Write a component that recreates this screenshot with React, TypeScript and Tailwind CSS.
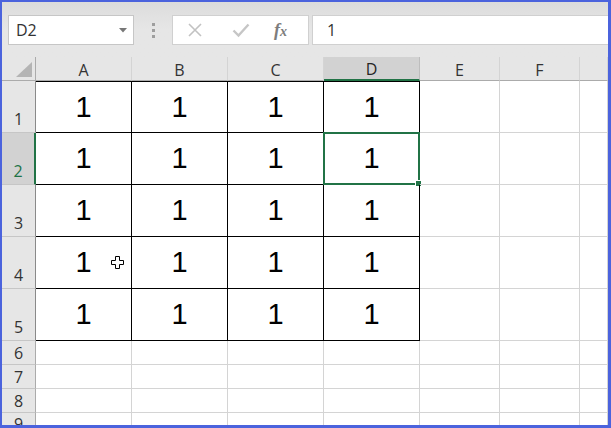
import React from 'react';

const COLS = ['A', 'B', 'C', 'D', 'E', 'F', ''];
const ROWS = [
  { n: '1', h: 'big' },
  { n: '2', h: 'big' },
  { n: '3', h: 'big' },
  { n: '4', h: 'big' },
  { n: '5', h: 'big' },
  { n: '6', h: 'small' },
  { n: '7', h: 'small' },
  { n: '8', h: 'small' },
  { n: '9', h: 'small' },
];

const ui = { fontFamily: '"Open Sans", "Noto Sans", sans-serif' };
const cellFont = { fontFamily: '"Liberation Sans", Arial, sans-serif' };

function PlusCursor() {
  return (
    <svg width="13" height="13" viewBox="0 0 13 13" className="absolute left-[75px] top-[19px]">
      <path
        d="M4.5 0.5h4v4h4v4h-4v4h-4v-4h-4v-4h4z"
        fill="#fff"
        stroke="#000"
        strokeWidth="1"
      />
    </svg>
  );
}

function FormulaBar() {
  return (
    <div className="flex h-[55px] items-start bg-gradient-to-b from-[#dcdcdc] via-[#e6e6e6] to-[#e6e6e6] pt-[13px]" style={ui}>
      <div className="ml-[6px] flex h-[30px] w-[126px] items-center justify-between border border-[#c6c6c6] bg-white pl-[7px] pr-[6px]">
        <span className="text-[16px] text-[#333]">D2</span>
        <svg width="8" height="5" viewBox="0 0 8 5">
          <path d="M0 0h8L4 4.5z" fill="#777" />
        </svg>
      </div>
      <div className="flex w-[38px] flex-col items-center gap-[3px] pt-[8px]">
        <span className="size-[3px] bg-[#9e9e9e]" />
        <span className="size-[3px] bg-[#9e9e9e]" />
        <span className="size-[3px] bg-[#9e9e9e]" />
      </div>
      <div className="flex h-[30px] w-[137px] items-center border border-[#d0d0d0] bg-white">
        <svg width="16" height="16" viewBox="0 0 16 16" className="ml-[14px]">
          <path d="M2 2l12 12M14 2L2 14" stroke="#c2c2c2" strokeWidth="1.6" />
        </svg>
        <svg width="18" height="16" viewBox="0 0 18 16" className="ml-[29px]">
          <path d="M1.5 8.5l5 5L16.5 2.5" fill="none" stroke="#c6c6c6" strokeWidth="2.4" />
        </svg>
        <span
          className="ml-[24px] text-[18px] italic font-bold text-[#7d7d7d]"
          style={{ fontFamily: '"Liberation Serif", "Times New Roman", serif' }}
        >
          f<span className="text-[14px]">x</span>
        </span>
      </div>
      <div className="ml-[3px] flex h-[30px] flex-1 items-center border-y border-l border-[#d0d0d0] bg-white pl-[14px] text-[16px] text-[#333]">
        1
      </div>
    </div>
  );
}

export default function App() {
  return (
    <div className="h-[428px] w-[611px] overflow-hidden border-b-[3px] border-l-2 border-r-[3px] border-t-2 border-[#4b63dd] bg-white">
      <FormulaBar />
      <div className="grid grid-cols-[34px_96px_96px_96px_96px_80px_80px_1fr] grid-rows-[24px_52px_52px_52px_52px_52px_24px_24px_24px_1fr]">
        {/* corner */}
        <div className="relative border-b border-r border-[#ababab] bg-[#e6e6e6]">
          <svg width="16" height="15" viewBox="0 0 16 15" className="absolute bottom-[3px] right-[3px]">
            <path d="M16 0v15H0z" fill="#b4b4b4" />
          </svg>
        </div>
        {COLS.map((c, i) => (
          <div
            key={'h' + i}
            className={
              c === 'D'
                ? 'flex items-center justify-center border-b-2 border-r border-b-[#217346] border-r-[#bdbdbd] bg-[#d2d2d2] pt-[2px] text-[16px] text-[#262626]'
                : 'flex items-center justify-center border-b border-r border-b-[#ababab] border-r-[#d4d4d4] bg-[#e6e6e6] pt-[2px] text-[16px] text-[#333]'
            }
            style={ui}
          >
            {c}
          </div>
        ))}
        {ROWS.map((r, ri) => {
          const big = r.h === 'big';
          return (
            <React.Fragment key={r.n}>
              <div
                className={
                  r.n === '2'
                    ? 'flex items-end justify-center border-b border-r-2 border-b-[#c6c6c6] border-r-[#217346] bg-[#d2d2d2] pb-[1px] text-[16px] text-[#217346]'
                    : big
                    ? 'flex items-end justify-center border-b border-r border-b-[#c6c6c6] border-r-[#8a8a8a] bg-[#e6e6e6] pb-[1px] text-[16px] text-[#333]'
                    : 'flex items-end justify-center border-b border-r border-b-[#c6c6c6] border-r-[#ababab] bg-[#e6e6e6] text-[16px] leading-[22px] text-[#333]'
                }
                style={ui}
              >
                {r.n}
              </div>
              {COLS.map((c, ci) => {
                const data = big && ci < 4;
                const sel = r.n === '2' && c === 'D';
                let cls = 'relative border-b border-r border-[#d4d4d4]';
                if (data) {
                  cls =
                    'relative flex items-center justify-center border-b border-r border-black text-[29px] text-black' +
                    (ri === 0 ? ' border-t' : '');
                }
                return (
                  <div key={c + ci} className={cls} style={cellFont}>
                    {data ? <span className="pt-[1px]">1</span> : null}
                    {r.n === '4' && c === 'A' ? <PlusCursor /> : null}
                    {sel ? (
                      <div className="absolute -bottom-[1px] -left-[1px] -right-[1px] -top-[1px] border-2 border-[#217346]">
                        <div className="absolute -bottom-[4px] -right-[4px] size-[7px] border border-white bg-[#217346]" />
                      </div>
                    ) : null}
                  </div>
                );
              })}
            </React.Fragment>
          );
        })}
      </div>
    </div>
  );
}
